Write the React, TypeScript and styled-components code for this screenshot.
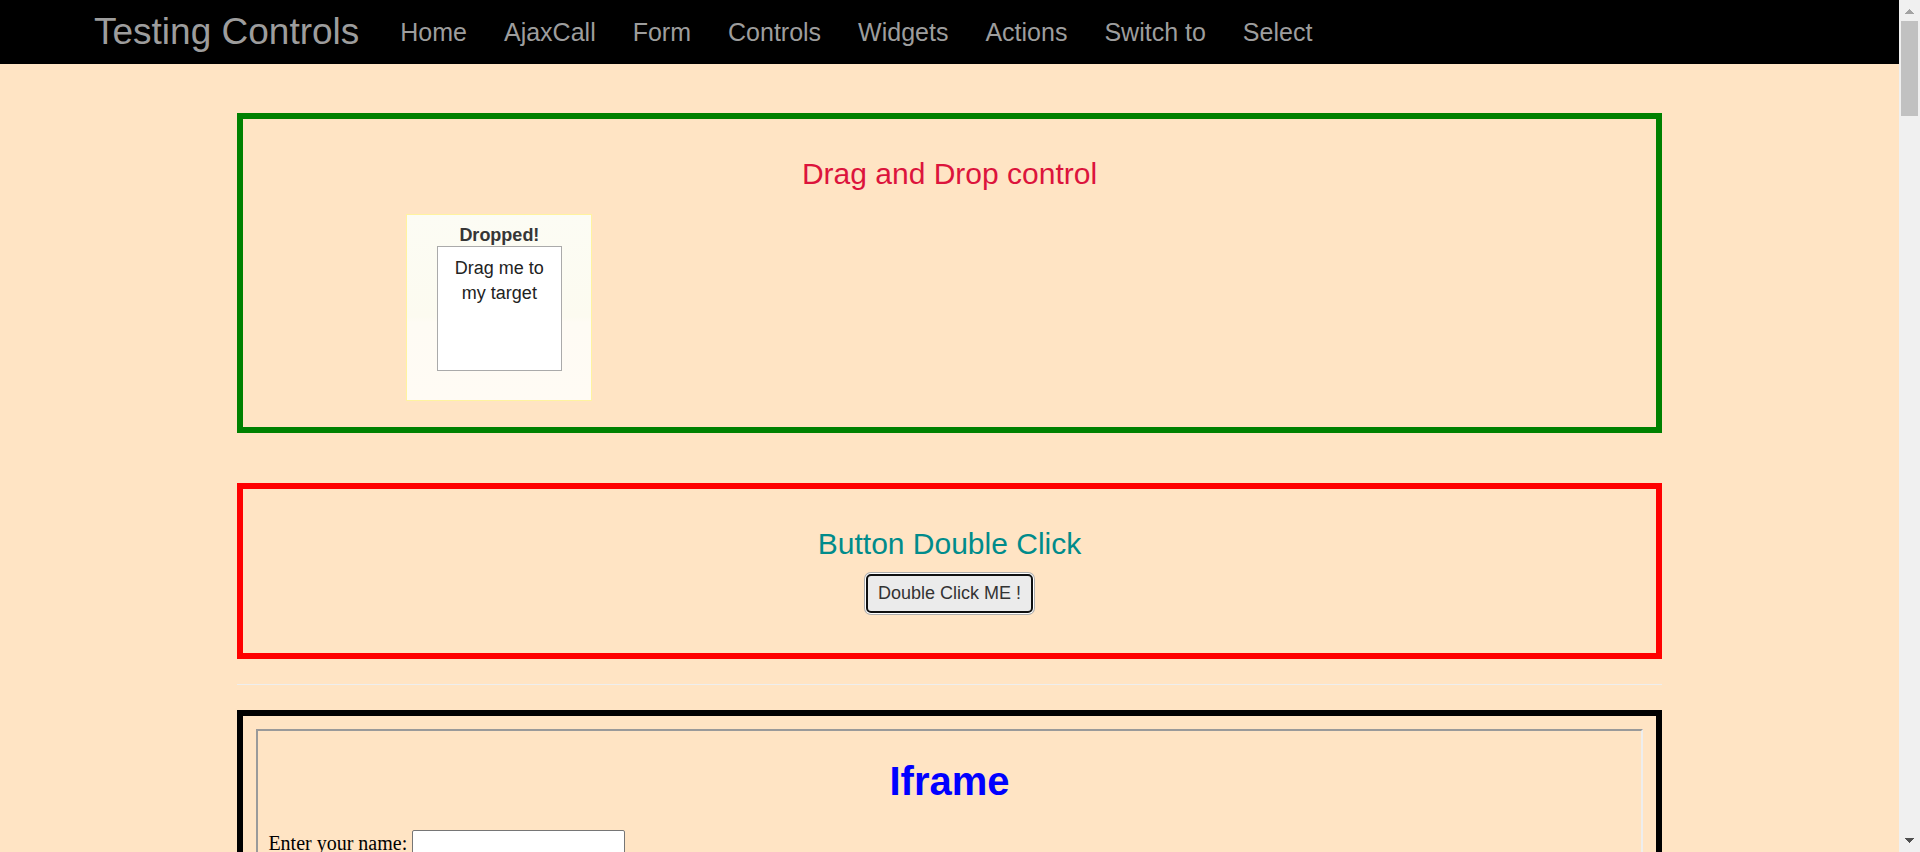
import React from 'react';
import styled, { createGlobalStyle } from 'styled-components';

const GlobalStyle = createGlobalStyle`
  *, *::before, *::after { box-sizing: border-box; }
  body {
    margin: 0;
    background: #ffe4c4;
    color: #333;
    font-family: Arial, "Liberation Sans", sans-serif;
    font-size: 18px;
    line-height: 25px;
  }
`;

const Window = styled.div`
  display: flex;
  height: 100vh;
  overflow: hidden;
`;

const Page = styled.div`
  flex: 1;
  min-width: 0;
  overflow: hidden;
`;

const Navbar = styled.nav`
  display: flex;
  align-items: center;
  gap: 37px;
  height: 64px;
  padding-left: 94px;
  background: #000;
`;

const NavLink = styled.a<{ $brand?: boolean }>`
  margin-right: ${(p) => (p.$brand ? 4 : 0)}px;
  color: #9d9d9d;
  font-size: ${(p) => (p.$brand ? 37 : 25)}px;
  line-height: 64px;
  text-decoration: none;
  white-space: nowrap;
`;

const Content = styled.main`
  width: 75%;
  margin: 49px auto 0;
`;

const Panel = styled.section<{ $color: string; $bottom?: number }>`
  padding: 13px 13px ${(p) => p.$bottom ?? 13}px;
  border: 6px solid ${(p) => p.$color};

  & + & {
    margin-top: 50px;
  }
`;

const Title = styled.h3<{ $color: string }>`
  margin: 25px 0 12px;
  color: ${(p) => p.$color};
  font-size: 30px;
  font-weight: 400;
  line-height: 33px;
  text-align: center;
`;

const Divider = styled.hr`
  height: 1px;
  margin: 25px 0;
  border: 0;
  background: #eee;
`;

const DropTarget = styled.div`
  width: 186px;
  height: 187px;
  margin: 24px 0 13px 150px;
  padding-top: 8px;
  border: 1px solid #fff3a0;
  background: linear-gradient(#fcfcf4, #fcfbf0 55%, #fefbf4 58%, #fffbf4);
  color: #363636;
  text-align: center;
`;

const DropLabel = styled.p`
  height: 23px;
  margin: 0;
  font-weight: 700;
`;

const Draggable = styled.div`
  position: relative;
  width: 125px;
  height: 125px;
  margin: 0 auto;
  padding: 9px 12px;
  border: 1px solid #aaa;
  background: #fff;
  color: #222;
`;

const ButtonRow = styled.div`
  display: flex;
  justify-content: center;
  padding-top: 2px;
`;

const ClickButton = styled.button`
  height: 39px;
  padding: 0 10px;
  border: 2px solid #101010;
  border-radius: 5px;
  outline: none;
  background: #ebebeb;
  box-shadow: 0 0 0 1px #fff, 0 0 0 2px #adadad;
  color: #333;
  font: inherit;
`;

const Frame = styled.div`
  height: 250px;
  padding: 27px 10px 10px;
  border: 2px solid;
  border-color: #9a9a9a #eee #eee #9a9a9a;
  color: #000;
  font-family: "Times New Roman", "Liberation Serif", serif;
  font-size: 20px;
`;

const FrameTitle = styled.h1`
  margin: 0 0 26px;
  color: #00f;
  font-family: Arial, "Liberation Sans", sans-serif;
  font-size: 40px;
  line-height: 46px;
  text-align: center;
`;

const Field = styled.div`
  display: flex;
  align-items: center;
  gap: 5px;
`;

const TextInput = styled.input`
  width: 213px;
  height: 27px;
  border: 1px solid #767676;
  border-radius: 2px;
  background: #fff;
  font-size: 17px;
`;

const Scrollbar = styled.div`
  display: flex;
  flex-direction: column;
  align-items: center;
  width: 21px;
  background: #f0f0f0;
`;

const Thumb = styled.div`
  width: 17px;
  height: 95px;
  margin-bottom: auto;
  background: #c1c1c1;
`;

const links = ['Home', 'AjaxCall', 'Form', 'Controls', 'Widgets', 'Actions', 'Switch to', 'Select'];

export default function App() {
  return (
    <Window>
      <GlobalStyle />
      <Page>
        <Navbar>
          <NavLink $brand href="#">Testing Controls</NavLink>
          {links.map((link) => (
            <NavLink key={link} href="#">{link}</NavLink>
          ))}
        </Navbar>
        <Content>
          <Panel $color="#008000">
            <Title $color="#dc143c">Drag and Drop control</Title>
            <DropTarget>
              <DropLabel>Dropped!</DropLabel>
              <Draggable>Drag me to my target</Draggable>
            </DropTarget>
          </Panel>
          <Panel $color="#ff0000" $bottom={40}>
            <Title $color="#008b8b">Button Double Click</Title>
            <ButtonRow>
              <ClickButton type="button">Double Click ME !</ClickButton>
            </ButtonRow>
          </Panel>
          <Divider />
          <Panel $color="#000">
            <Frame>
              <FrameTitle>Iframe</FrameTitle>
              <Field>
                <label htmlFor="name">Enter your name:</label>
                <TextInput id="name" type="text" />
              </Field>
            </Frame>
          </Panel>
        </Content>
      </Page>
      <Scrollbar aria-hidden="true">
        <svg width="21" height="21" viewBox="0 0 21 21" shapeRendering="crispEdges">
          <path d="M6 14L10.5 9L15 14Z" fill="#a3a3a3" />
        </svg>
        <Thumb />
        <svg width="21" height="21" viewBox="0 0 21 21" shapeRendering="crispEdges">
          <path d="M6 7L10.500 12L15 7Z" fill="#505050" />
        </svg>
      </Scrollbar>
    </Window>
  );
}
